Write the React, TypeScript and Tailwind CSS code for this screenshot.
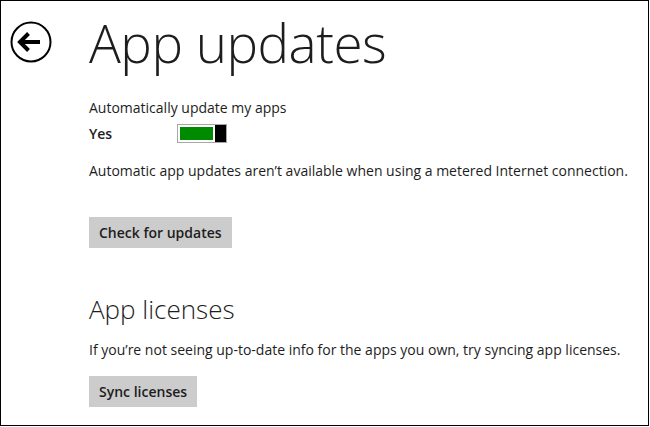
export default function App() {
  return (
    <div className="w-[650px] h-[427px] bg-white">
      <div
        className="w-[649px] h-[426px] border border-black bg-white text-[#1d1d1d] flex"
        style={{ fontFamily: '"Open Sans", "Noto Sans", sans-serif' }}
      >
        {/* back button */}
        <div className="w-[88px] shrink-0 pl-[9px] pt-[20px]">
          <svg width="42" height="42" viewBox="0 0 42 42">
            <circle cx="21" cy="21" r="19.5" fill="none" stroke="#000" strokeWidth="2" />
            <path d="M10 21 H30" stroke="#000" strokeWidth="4" />
            <path d="M18.5 12.5 L10 21 L18.5 29.5" fill="none" stroke="#000" strokeWidth="4" />
          </svg>
        </div>

        <div className="flex flex-col">
          <h1 className="text-[53px] font-light leading-none mt-[15px] tracking-[-0.5px]">
            App updates
          </h1>

          <p className="text-[14px] mt-[30px] leading-[18px]">Automatically update my apps</p>
          <div className="flex items-center mt-[6px]">
            <span className="text-[14px] font-semibold w-[88px]">Yes</span>
            <div className="flex h-[19px] w-[50px] border border-[#a6a6a6]">
              <div className="flex-1 border-2 border-white bg-[#008a00]" />
              <div className="w-[11px] bg-black" />
            </div>
          </div>

          <p className="text-[14px] mt-[16px]">
            Automatic app updates aren’t available when using a metered Internet connection.
          </p>

          <button className="self-start mt-[36px] bg-[#cccccc] h-[31px] px-[10px] text-[14px] font-semibold">
            Check for updates
          </button>

          <h2 className="text-[26px] font-light leading-none mt-[48px]">App licenses</h2>
          <p className="text-[14px] mt-[17px]">
            If you’re not seeing up-to-date info for the apps you own, try syncing app licenses.
          </p>
          <button className="self-start mt-[16px] bg-[#cccccc] h-[31px] px-[10px] text-[14px] font-semibold">
            Sync licenses
          </button>
        </div>
      </div>
    </div>
  );
}
